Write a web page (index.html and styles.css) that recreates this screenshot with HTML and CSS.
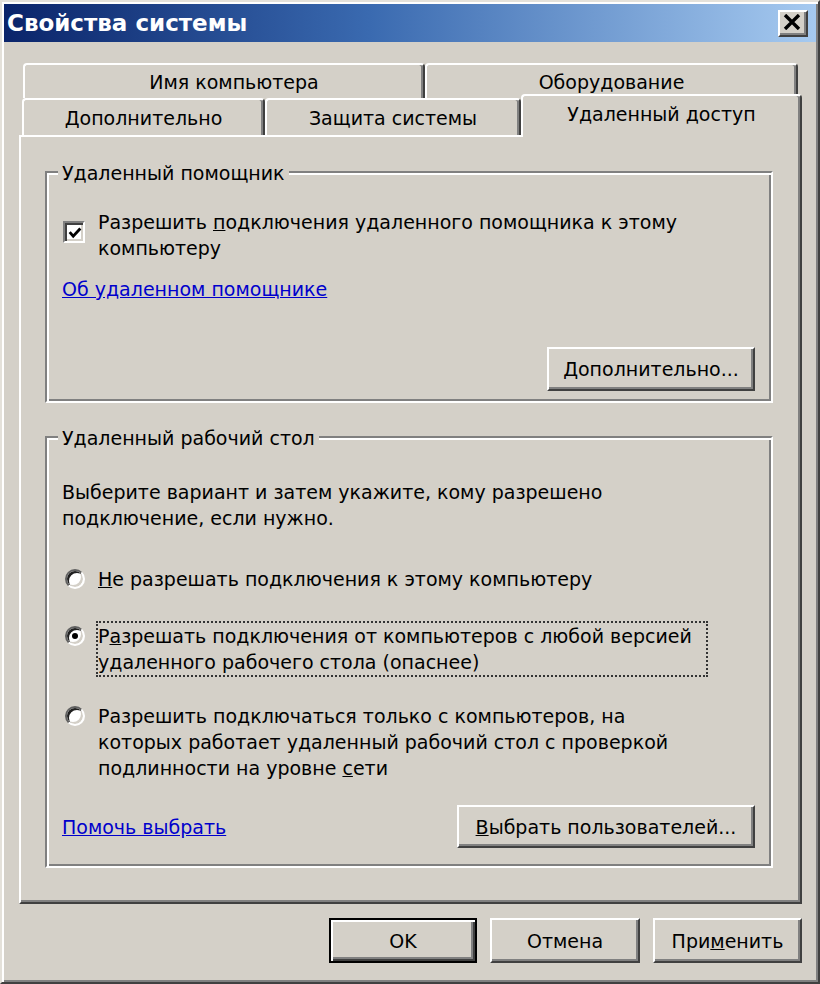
FILE: index.html
```html
<!DOCTYPE html>
<html lang="ru">
<head>
<meta charset="utf-8">
<title>Свойства системы</title>
<link rel="stylesheet" href="styles.css">
</head>
<body>
<div class="window">
  <div class="titlebar">
    <span class="title">Свойства системы</span>
    <div class="close">
      <svg width="18" height="16" viewBox="0 0 18 16"><path d="M2 1 L16 15 M16 1 L2 15" stroke="#000" stroke-width="3.4" fill="none"/></svg>
    </div>
  </div>
  <div class="client">
    <div class="tab-row back">
      <div class="tab w-name">Имя компьютера</div>
      <div class="tab w-hw">Оборудование</div>
    </div>
    <div class="tab-row front">
      <div class="tab w-adv">Дополнительно</div>
      <div class="tab w-prot">Защита системы</div>
      <div class="tab active w-remote">Удаленный доступ</div>
    </div>
    <div class="panel">
      <div class="group g1">
        <div class="group-title">Удаленный помощник</div>
        <div class="check-row">
          <div class="checkbox">
            <svg width="18" height="18" viewBox="0 0 18 18"><path d="M3 8 L7 12.5 L15 4" stroke="#000" stroke-width="3.2" fill="none"/></svg>
          </div>
          <div class="opt-text">Разрешить <u>п</u>одключения удаленного помощника к этому<br>компьютеру</div>
        </div>
        <div class="link-line"><a class="link">Об удаленном помощнике</a></div>
        <div class="btn-row g1-btns">
          <div class="btn btn-adv"><u>Д</u>ополнительно...</div>
        </div>
      </div>
      <div class="group g2">
        <div class="group-title">Удаленный рабочий стол</div>
        <div class="desc">Выберите вариант и затем укажите, кому разрешено<br>подключение, если нужно.</div>
        <div class="radio-row r1">
          <div class="radio"></div>
          <div class="opt-text"><u>Н</u>е разрешать подключения к этому компьютеру</div>
        </div>
        <div class="radio-row r2">
          <div class="radio checked"><span class="dot"></span></div>
          <div class="opt-text focus">Р<u>а</u>зрешать подключения от компьютеров с любой версией<br>удаленного рабочего стола (опаснее)</div>
        </div>
        <div class="radio-row r3">
          <div class="radio"></div>
          <div class="opt-text">Разрешить подключаться только с компьютеров, на<br>которых работает удаленный рабочий стол с проверкой<br>подлинности на уровне <u>с</u>ети</div>
        </div>
        <div class="bottom-row">
          <a class="link">Помочь выбрать</a>
          <div class="btn btn-users"><u>В</u>ыбрать пользователей...</div>
        </div>
      </div>
    </div>
    <div class="footer">
      <div class="btn default w-ok">OK</div>
      <div class="btn w-cancel">Отмена</div>
      <div class="btn w-apply">При<u>м</u>енить</div>
    </div>
  </div>
</div>
</body>
</html>
```

FILE: styles.css
```css
* { box-sizing: border-box; }
html, body { margin: 0; padding: 0; }
body {
  width: 820px;
  height: 984px;
  overflow: hidden;
  background: #d4d0c8;
  font-family: "DejaVu Sans", Tahoma, sans-serif;
  font-size: 19px;
  line-height: 26px;
  color: #000;
}
.window {
  width: 820px;
  height: 984px;
  background: #d4d0c8;
  border: 2px solid;
  border-color: #e4e1da #404040 #404040 #e4e1da;
  box-shadow: inset 2px 2px 0 #fff, inset -2px -2px 0 #808080;
  padding: 2px;
  display: flex;
  flex-direction: column;
}
.titlebar {
  height: 38px;
  flex: none;
  background: linear-gradient(to right, #0a246a 0%, #3a6ab0 45%, #a6caf0 100%);
  display: flex;
  align-items: center;
  justify-content: space-between;
  padding: 0 8px 0 3px;
}
.title {
  color: #fff;
  font-weight: bold;
  font-size: 23px;
  letter-spacing: 0;
}
.close {
  width: 30px;
  height: 27px;
  background: #d4d0c8;
  border: 2px solid;
  border-color: #fff #404040 #404040 #fff;
  box-shadow: inset -2px -2px 0 #808080;
  display: flex;
  align-items: center;
  justify-content: center;
  padding: 0 2px 2px 0;
}
.client {
  flex: 1;
  display: flex;
  flex-direction: column;
  padding-top: 21px;
}
.tab-row {
  display: flex;
}
.tab-row.back {
  height: 35px;
  margin-left: 19px;
}
.tab-row.front {
  height: 37px;
  margin-left: 18px;
  align-items: flex-end;
}
.tab {
  height: 100%;
  display: flex;
  align-items: center;
  justify-content: center;
  border-top: 2px solid #fff;
  border-left: 2px solid #fff;
  border-right: 2px solid #404040;
  box-shadow: inset -2px 0 0 #808080;
  border-radius: 4px 4px 0 0;
  background: #d4d0c8;
  white-space: nowrap;
}
.w-name { width: 402px; padding-left: 20px; }
.w-hw { width: 373px; }
.w-adv { width: 243px; }
.w-prot { width: 256px; }
.w-remote { width: 281px; }
.tab.active {
  height: 43px;
  margin-bottom: -2px;
  padding-bottom: 6px;
  position: relative;
  z-index: 1;
}
.panel {
  margin-left: 15px;
  width: 783px;
  height: 769px;
  flex: none;
  border: 2px solid;
  border-color: #fff #404040 #404040 #fff;
  box-shadow: inset -2px -2px 0 #808080;
  padding: 34px 0 0 24px;
}
.group {
  width: 728px;
  border: 2px solid;
  border-color: #808080 #fff #fff #808080;
  box-shadow: inset 2px 2px 0 #fff, inset -2px -2px 0 #808080;
  padding: 0 16px 0 15px;
}
.group-title {
  width: fit-content;
  margin: -13px 0 0 -4px;
  padding: 0 4px;
  background: #d4d0c8;
  line-height: 26px;
}
.g1 { padding-bottom: 10px; }
.g2 { margin-top: 33px; padding-bottom: 18px; }
.check-row {
  display: flex;
  align-items: flex-start;
  margin-top: 23px;
}
.checkbox {
  width: 22px;
  height: 22px;
  margin: 12px 13px 0 1px;
  flex: none;
  background: #fff;
  border: 2px solid;
  border-color: #808080 #fff #fff #808080;
  box-shadow: inset 2px 2px 0 #404040, inset -2px -2px 0 #d4d0c8;
  display: flex;
  align-items: center;
  justify-content: center;
  padding: 2px 0 0 2px;
}
.link-line { margin-top: 15px; }
.link {
  color: #0000cc;
  text-decoration: underline;
}
.btn-row {
  display: flex;
  justify-content: flex-end;
}
.g1-btns { margin-top: 45px; }
.btn {
  display: flex;
  align-items: center;
  justify-content: center;
  background: #d4d0c8;
  border: 2px solid;
  border-color: #fff #404040 #404040 #fff;
  box-shadow: inset -2px -2px 0 #808080;
  white-space: nowrap;
  flex: none;
}
.btn-adv { width: 208px; height: 44px; }
.btn-users { width: 298px; height: 43px; }
.desc { margin-top: 28px; }
.radio-row {
  display: flex;
  align-items: flex-start;
}
.r1 { margin-top: 35px; }
.r2 { margin-top: 29px; }
.r3 { margin-top: 26px; }
.radio {
  width: 20px;
  height: 20px;
  flex: none;
  margin: 3px 13px 0 3px;
  border-radius: 50%;
  background: #fff;
  border: 2px solid;
  border-color: #606060 #fff #fff #606060;
  box-shadow: inset 2px 2px 0 #202020, inset -2px -2px 0 #d4d0c8;
  display: flex;
  align-items: center;
  justify-content: center;
}
.r2 .radio { margin-top: 5px; }
.dot {
  width: 6px;
  height: 6px;
  border-radius: 50%;
  background: #000;
}
.focus {
  border: 2px dotted #333;
  margin: 0 0 0 -2px;
  padding-right: 14px;
}
.bottom-row {
  display: flex;
  justify-content: space-between;
  align-items: center;
  margin-top: 24px;
}
.footer {
  display: flex;
  justify-content: flex-end;
  gap: 13px;
  margin-top: 14px;
  padding-right: 14px;
}
.footer .btn { height: 45px; }
.w-ok { width: 148px; }
.w-cancel { width: 150px; }
.w-apply { width: 149px; }
.btn.default {
  border: 2px solid #000;
  box-shadow: inset 2px 2px 0 #fff, inset -2px -2px 0 #404040, inset -4px -4px 0 #808080;
}
```
